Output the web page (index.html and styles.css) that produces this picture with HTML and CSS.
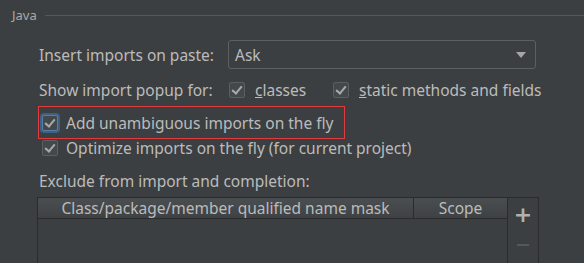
FILE: index.html
```html
<!DOCTYPE html>
<html lang="en">
<head>
    <meta charset="UTF-8">
    <title>Auto Import</title>
    <link rel="stylesheet" href="styles.css">
</head>
<body>

<div class="group">
    <div class="group-title">
        <span>Java</span>
        <div class="line"></div>
    </div>

    <div class="content">
        <div class="row row-paste">
            <label class="label-paste">Insert imports on paste:</label>
            <div class="combo">
                <span>Ask</span>
                <span class="arrow"></span>
            </div>
        </div>

        <div class="row row-popup">
            <label class="label-popup">Show import popup for:</label>
            <span class="check"></span>
            <span class="check-text text-classes"><u>c</u>lasses</span>
            <span class="check"></span>
            <span class="check-text"><u>s</u>tatic methods and fields</span>
        </div>

        <div class="row row-focus">
            <span class="check focused"></span>
            <span class="check-text">Add unambiguous imports on the fly</span>
        </div>

        <div class="row row-optimize">
            <span class="check"></span>
            <span class="check-text">Optimize imports on the fly (for current project)</span>
        </div>

        <div class="row row-exclude">Exclude from import and completion:</div>

        <div class="table-wrap">
            <div class="table">
                <div class="table-head">
                    <div class="col-mask">Class/package/member qualified name mask</div>
                    <div class="col-scope">Scope</div>
                </div>
                <div class="table-body"></div>
            </div>
            <div class="toolbar">
                <span class="tool plus">+</span>
                <span class="tool minus"></span>
            </div>
        </div>
    </div>
</div>

</body>
</html>
```

FILE: styles.css
```css
* {
    margin: 0;
    padding: 0;
    box-sizing: border-box;
}

body {
    background-color: #3c3f41;
    color: #bbbbbb;
    font-family: 'Noto Sans', 'Open Sans', sans-serif;
    font-size: 15.5px;
    width: 584px;
    height: 263px;
    overflow: hidden;
}

.group-title {
    display: flex;
    align-items: center;
    height: 30px;
    padding-left: 12px;
    font-size: 13px;
    color: #a9a9a9;
}

.group-title .line {
    flex: 1;
    height: 1px;
    background-color: #555758;
    margin-left: 8px;
}

.content {
    padding-left: 39px;
}

.row {
    display: flex;
    align-items: center;
}

.row-paste {
    margin-top: 10px;
    height: 29px;
}

.label-paste {
    width: 189px;
}

.combo {
    width: 308px;
    height: 29px;
    border: 1px solid #5e6060;
    border-radius: 3px;
    display: flex;
    align-items: center;
    justify-content: space-between;
    padding: 0 9px 0 6px;
}

.arrow {
    width: 0;
    height: 0;
    border-left: 5px solid transparent;
    border-right: 5px solid transparent;
    border-top: 6px solid #a6a6a6;
}

.row-popup {
    margin-top: 13px;
    height: 16px;
}

.label-popup {
    width: 190px;
}

.check {
    width: 16px;
    height: 16px;
    border: 1px solid #5c5f61;
    border-radius: 2px;
    background-color: #43494a;
    position: relative;
    flex-shrink: 0;
}

.check::after {
    content: "";
    position: absolute;
    left: 4px;
    top: 1px;
    width: 4px;
    height: 8px;
    border-right: 2px solid #a9a9a9;
    border-bottom: 2px solid #a9a9a9;
    transform: rotate(40deg);
}

.check-text {
    margin-left: 10px;
}

.text-classes {
    width: 78px;
}

.row-focus {
    margin: 8px 0 0 -1px;
    width: 307px;
    height: 33px;
    border: 1px solid #e03a3c;
    padding-left: 3px;
}

.check.focused {
    box-shadow: 0 0 0 2px #3d6185;
    border-color: #5a7ea3;
}

.row-focus .check-text {
    margin-left: 8px;
}

.row-optimize {
    margin-top: 1px;
    height: 16px;
    padding-left: 3px;
}

.row-optimize .check-text {
    margin-left: 8px;
}

.row-exclude {
    margin-top: 16px;
    height: 18px;
}

.table-wrap {
    display: flex;
    margin-top: 7px;
    margin-left: -2px;
}

.table {
    width: 470px;
    height: 66px;
    border-left: 1px solid #2b2b2b;
    border-top: 1px solid #2b2b2b;
}

.table-head {
    display: flex;
    height: 21px;
    background: linear-gradient(#4b4e50, #3f4244);
    border-bottom: 1px solid #2b2b2b;
}

.col-mask {
    width: 376px;
    text-align: center;
    border-right: 1px solid #2b2b2b;
    line-height: 20px;
}

.col-scope {
    flex: 1;
    text-align: center;
    line-height: 20px;
}

.toolbar {
    width: 32px;
    height: 66px;
    border: 1px solid #2b2b2b;
    border-bottom: none;
    display: flex;
    flex-direction: column;
    align-items: center;
}

.tool.plus {
    font-family: 'DejaVu Sans', sans-serif;
    font-size: 22px;
    font-weight: bold;
    color: #b0b0b0;
    line-height: 22px;
    margin-top: 6px;
}

.tool.minus {
    width: 12px;
    height: 2px;
    background-color: #555758;
    margin-top: 18px;
}
```
